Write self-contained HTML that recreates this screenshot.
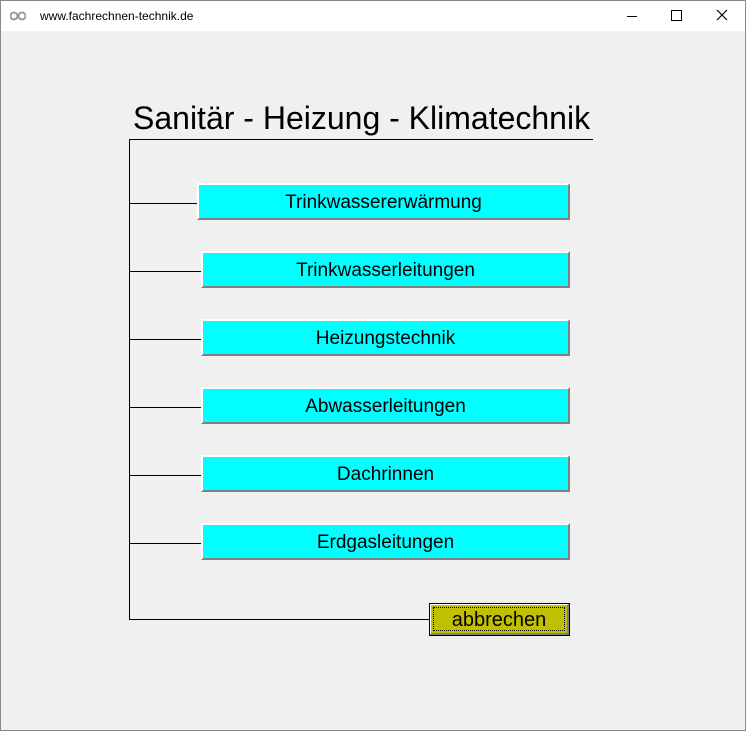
<html><head><style>
body{margin:0;width:746px;height:731px;overflow:hidden;font-family:"Liberation Sans",sans-serif;background:#f0f0f0;position:relative}
.win{position:absolute;left:0;top:0;width:744px;height:729px;border:1px solid #888;background:#f0f0f0}
.tb{position:absolute;left:0;top:0;width:744px;height:30px;background:#fff}
.a{position:absolute}
.btn{position:absolute;background:#00ffff;border-top:2px solid #fff;border-left:2px solid #fff;border-bottom:2px solid #808080;border-right:2px solid #808080;box-sizing:border-box;text-align:center;font-size:19px;color:#000;line-height:35px;overflow:hidden}
.h{position:absolute;height:1px;background:#000;left:129px}
</style></head><body><div class="win">
<div class="tb">
<svg class="a" style="left:9px;top:9px" width="16" height="12"><circle cx="4" cy="6" r="3.5" fill="none" stroke="#999" stroke-width="2"/><circle cx="12" cy="6" r="3.5" fill="none" stroke="#999" stroke-width="2"/></svg>
<div class="a" style="left:39px;top:8px;font-size:12px">www.fachrechnen-technik.de</div>
<div class="a" style="left:626px;top:15px;width:10px;height:1px;background:#000"></div>
<div class="a" style="left:670px;top:9px;width:9px;height:9px;border:1px solid #000"></div>
<svg class="a" style="left:715px;top:8px" width="12" height="12"><path d="M1 1L11 11M11 1L1 11" stroke="#000" stroke-width="1.2"/></svg>
</div>
</div>
<div class="a" style="left:133px;top:99px;font-size:32px;line-height:38px;white-space:nowrap">Sanitär - Heizung - Klimatechnik</div>
<div class="a" style="left:129px;top:139px;width:464px;height:1px;background:#000"></div>
<div class="a" style="left:129px;top:139px;width:1px;height:481px;background:#000"></div>
<div class="h" style="top:203px;width:68px"></div>
<div class="h" style="top:271px;width:72px"></div>
<div class="h" style="top:339px;width:72px"></div>
<div class="h" style="top:407px;width:72px"></div>
<div class="h" style="top:475px;width:72px"></div>
<div class="h" style="top:543px;width:72px"></div>
<div class="h" style="top:619px;width:300px"></div>
<div class="btn" style="left:197px;top:183px;width:373px;height:37px">Trinkwassererwärmung</div>
<div class="btn" style="left:201px;top:251px;width:369px;height:37px">Trinkwasserleitungen</div>
<div class="btn" style="left:201px;top:319px;width:369px;height:37px">Heizungstechnik</div>
<div class="btn" style="left:201px;top:387px;width:369px;height:37px">Abwasserleitungen</div>
<div class="btn" style="left:201px;top:455px;width:369px;height:37px">Dachrinnen</div>
<div class="btn" style="left:201px;top:523px;width:369px;height:37px">Erdgasleitungen</div>
<div class="a" style="left:429px;top:603px;width:141px;height:33px;box-sizing:border-box;border:1px solid #000;background:#c0c000">
<div style="position:absolute;left:0;top:0;right:0;bottom:0;border-top:1px solid #fff;border-left:1px solid #fff;border-right:2px solid #808080;border-bottom:2px solid #808080"></div>
<div style="position:absolute;left:3px;top:3px;right:4px;bottom:4px;border:1px dotted #000;text-align:center;font-size:20px;line-height:25px">abbrechen</div>
</div>
</body></html>
